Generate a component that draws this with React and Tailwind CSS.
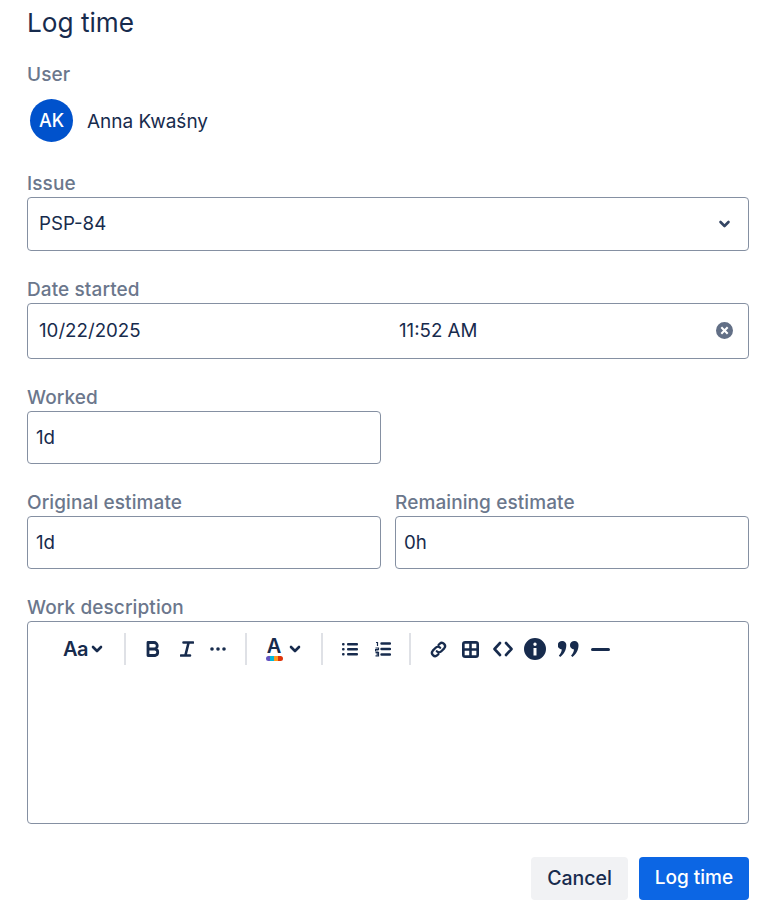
const ink = "text-[#172b4d]";

function Label({ children, className = "" }) {
  return <div className={`text-[19px] leading-[22px] font-medium tracking-[0.1px] text-[#6b778c] ${className}`}>{children}</div>;
}

function Box({ className = "", children }) {
  return (
    <div className={`border border-[#8590a2] rounded-[4px] bg-white flex items-center text-[18.7px] text-[#172b4d] ${className}`}>
      {children}
    </div>
  );
}

function Chevron({ className = "" }) {
  return (
    <svg viewBox="0 0 12 8" className={className} fill="none" stroke="currentColor" strokeWidth="2.6" strokeLinecap="round" strokeLinejoin="round">
      <path d="M2 2l4 4 4-4" />
    </svg>
  );
}

function Sep({ className = "" }) {
  return <div className={`w-[2px] h-[32px] bg-[#dfe1e6] ${className}`} />;
}

function Toolbar() {
  return (
    <div className="flex items-center h-[54px] text-[#172b4d] pl-[35px]">
      <span className="text-[20px] font-semibold leading-none w-[26px] tracking-[-0.5px]">Aa</span>
      <Chevron className="w-[12px] h-[8px] ml-[2px]" />
      <Sep className="ml-[21px]" />
      <svg viewBox="0 0 14 16" className="ml-[20px] w-[14px] h-[16px]" fill="none" stroke="currentColor" strokeWidth="2.8" strokeLinejoin="round">
        <path d="M2 1.500h6a3.200 3.200 0 0 1 0 6.500H2zM2 8h7a3.300 3.300 0 0 1 0 6.500H2z" />
      </svg>
      <span className="ml-[20px] w-[14px] flex justify-center">
        <svg viewBox="0 0 14 16" className="w-[14px] h-[16px]" fill="none" stroke="currentColor" strokeWidth="2.6" strokeLinecap="round"><path d="M3.500 1.500h9.500M1 14.500h9M8.500 2L5.500 14" /></svg>
      </span>
      <svg viewBox="0 0 16 4" className="ml-[16px] w-[16px] h-[4px]" fill="currentColor"><circle cx="2" cy="2" r="1.800" /><circle cx="8" cy="2" r="1.800" /><circle cx="14" cy="2" r="1.800" /></svg>
      <Sep className="ml-[19px]" />
      <span className="ml-[18px] w-[18px] flex flex-col items-center">
        <span className="text-[20px] font-semibold leading-[17px]">A</span>
        <span className="flex h-[5px] w-[17px] rounded-full overflow-hidden mt-[1px]">
          <span className="flex-1 bg-[#6554c0]" />
          <span className="flex-1 bg-[#00b8d9]" />
          <span className="flex-1 bg-[#ff991f]" />
          <span className="flex-1 bg-[#de350b]" />
        </span>
      </span>
      <Chevron className="w-[12px] h-[8px] ml-[6px]" />
      <Sep className="ml-[20px]" />
      <svg viewBox="0 0 16 14" className="ml-[19px] w-[16px] h-[14px]" fill="currentColor">
        <rect x="0" y="1" width="2.600" height="2.400" rx="1" /><rect x="0" y="6" width="2.600" height="2.400" rx="1" /><rect x="0" y="11" width="2.600" height="2.400" rx="1" />
        <rect x="5" y="1" width="11" height="2.400" rx="1" /><rect x="5" y="6" width="11" height="2.400" rx="1" /><rect x="5" y="11" width="11" height="2.400" rx="1" />
      </svg>
      <svg viewBox="0 0 16 16" className="ml-[17px] w-[16px] h-[16px]" fill="none" stroke="currentColor">
        <path strokeWidth="1.200" d="M1 1.500h1.500V5M0.500 7h3v1.500h-3V10h3M0.500 11.700h3v1.500h-2 2v1.600h-3" />
        <path strokeWidth="2.400" strokeLinecap="round" d="M6.500 2.500H15M6.500 8H15M6.500 13.500H15" />
      </svg>
      <Sep className="ml-[18px]" />
      <svg viewBox="0 0 20 20" className="ml-[18px] w-[19px] h-[19px]" fill="none" stroke="currentColor" strokeWidth="2.400" strokeLinecap="round">
        <path d="M8.200 11.800a3.400 3.400 0 0 0 4.800 0l3-3a3.400 3.400 0 0 0-4.800-4.800l-1.200 1.200" />
        <path d="M11.800 8.200a3.400 3.400 0 0 0-4.800 0l-3 3a3.400 3.400 0 0 0 4.800 4.800l1.200-1.200" />
      </svg>
      <svg viewBox="0 0 16 16" className="ml-[14px] w-[17px] h-[17px]" fill="currentColor">
        <path fillRule="evenodd" d="M3 0h10a3 3 0 0 1 3 3v10a3 3 0 0 1-3 3H3a3 3 0 0 1-3-3V3a3 3 0 0 1 3-3zm-.5 2.500v4.300h4.300V2.500H2.500zm6.700 0v4.300h4.300V2.500H9.200zM2.500 9.200v4.300h4.300V9.200H2.500zm6.700 0v4.300h4.300V9.200H9.200z" />
      </svg>
      <svg viewBox="0 0 20 16" className="ml-[14px] w-[20px] h-[16px]" fill="none" stroke="currentColor" strokeWidth="2.600" strokeLinecap="round" strokeLinejoin="round">
        <path d="M7 2L1.500 8 7 14M13 2l5.500 6L13 14" />
      </svg>
      <svg viewBox="0 0 22 22" className="ml-[11px] w-[22px] h-[22px]" fill="currentColor">
        <path fillRule="evenodd" d="M11 0a11 11 0 1 1 0 22 11 11 0 0 1 0-22zm0 4.500a1.700 1.700 0 1 0 0 3.400 1.700 1.700 0 0 0 0-3.400zM9.500 10v7.500h3V10h-3z" />
      </svg>
      <svg viewBox="0 0 22 18" className="ml-[12px] w-[21px] h-[18px]" fill="currentColor">
        <path d="M4.500 0.500a4.200 4.200 0 0 1 4.200 4.500c0 5-2.700 9.700-6.500 12.300l-1.300-1.500c1.700-1.800 2.800-3.700 3.100-6.300A4.200 4.200 0 0 1 4.500 0.500z" />
        <path d="M17.300 0.500a4.200 4.200 0 0 1 4.200 4.500c0 5-2.700 9.700-6.500 12.300l-1.300-1.500c1.700-1.800 2.800-3.700 3.100-6.300a4.200 4.200 0 0 1 .5-9z" />
      </svg>
      <div className="ml-[12px] w-[19px] h-[3px] rounded-full bg-[#172b4d]" />
    </div>
  );
}

export default function App() {
  return (
    <div className={`w-[775px] h-[907px] bg-white pl-[27px] pr-[26px] ${ink} font-['Inter','Noto_Sans',sans-serif] overflow-hidden`}>
      <h1 className="text-[26.2px] leading-[28px] pt-[9px] font-normal">Log time</h1>

      <Label className="mt-[27px]">User</Label>
      <div className="flex items-center mt-[13px] pl-[3px]">
        <div className="w-[43px] h-[43px] rounded-full bg-[#0052cc] text-white flex items-center justify-center text-[18px] font-medium">AK</div>
        <span className="ml-[14px] text-[19px] pt-[3px]">Anna Kwaśny</span>
      </div>

      <Label className="mt-[31px]">Issue</Label>
      <Box className="h-[54px] mt-[2px] pl-[11px] pr-[17px] justify-between">
        <span>PSP-84</span>
        <Chevron className="w-[13px] h-[8px] text-[#344563]" />
      </Box>

      <Label className="mt-[28px]">Date started</Label>
      <Box className="h-[56px] mt-[2px] pl-[11px] pr-[15px]">
        <span className="w-[360px]">10/22/2025</span>
        <span className="flex-1">11:52 AM</span>
        <svg viewBox="0 0 16 16" className="w-[17px] h-[17px] -mt-[1px] text-[#626f86]" fill="currentColor">
          <path fillRule="evenodd" d="M8 0a8 8 0 1 1 0 16A8 8 0 0 1 8 0zM5.700 4.300L4.300 5.700 6.600 8l-2.300 2.300 1.400 1.400L8 9.400l2.300 2.300 1.400-1.400L9.400 8l2.300-2.300-1.400-1.400L8 6.600 5.700 4.300z" />
        </svg>
      </Box>

      <Label className="mt-[28px]">Worked</Label>
      <Box className="h-[53px] w-[354px] mt-[2px] pl-[8px] pt-[1px]">1d</Box>

      <div className="grid grid-cols-[354px_354px] gap-x-[14px] mt-[28px]">
        <div>
          <Label>Original estimate</Label>
          <Box className="h-[53px] mt-[2px] pl-[8px] pt-[1px]">1d</Box>
        </div>
        <div>
          <Label>Remaining estimate</Label>
          <Box className="h-[53px] mt-[2px] pl-[8px] pt-[1px]">0h</Box>
        </div>
      </div>

      <Label className="mt-[28px]">Work description</Label>
      <div className="h-[203px] mt-[2px] border border-[#8590a2] rounded-[4px] bg-white">
        <Toolbar />
      </div>

      <div className="flex justify-end gap-[11px] mt-[33px]">
        <button className="w-[97px] h-[43px] rounded-[4px] bg-[#f1f2f4] text-[19.5px] font-medium text-[#172b4d]">Cancel</button>
        <button className="w-[110px] h-[43px] rounded-[4px] bg-[#0c66e4] text-[19px] font-medium text-white">Log time</button>
      </div>
    </div>
  );
}
